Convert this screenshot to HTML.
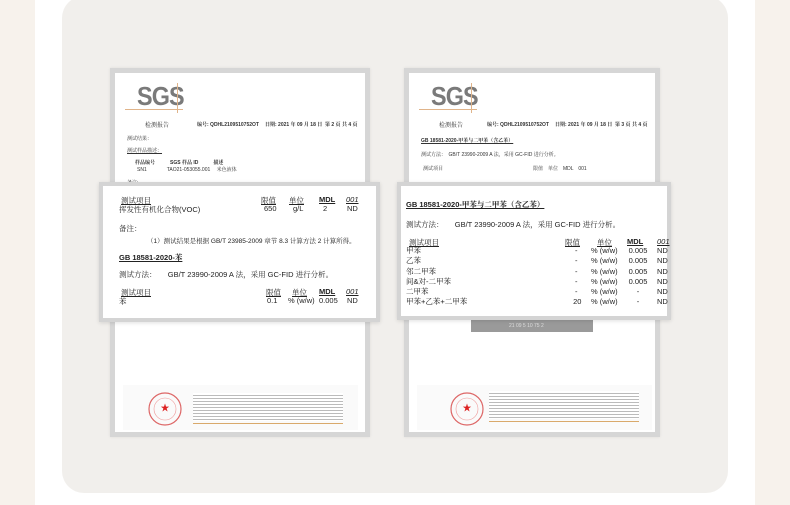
<!DOCTYPE html>
<html><head><meta charset="utf-8"><style>
*{margin:0;padding:0;box-sizing:border-box}
body{width:790px;height:505px;background:#fff;position:relative;overflow:hidden;font-family:"Liberation Sans","Noto Serif CJK SC",sans-serif;color:#222}
.a{position:absolute}
.cream{background:#f7f2ec}
.panel{left:62px;top:-4px;width:666px;height:497px;background:#f1efec;border-radius:22px}
.doc{background:#fff;border:5px solid #d6d6d6;box-shadow:0 0 3px rgba(0,0,0,.08)}
.card{background:#fff;border:4px solid #d4d4d4;box-shadow:0 1px 4px rgba(0,0,0,.12)}
.sgs{font:bold 26px "Liberation Sans",sans-serif;color:#7a7a7a;letter-spacing:-1px;transform:scaleX(.9);transform-origin:left}
.t{font-size:5px;color:#333;white-space:nowrap}
.s{font-size:7.5px;white-space:nowrap;color:#222}
.u{text-decoration:underline}
</style></head><body>
<div class="a cream" style="left:0;top:0;width:35px;height:505px"></div>
<div class="a cream" style="left:755px;top:0;width:35px;height:505px"></div>
<div class="a panel"></div>

<!-- left doc -->
<div class="a doc" style="left:110px;top:68px;width:260px;height:369px">
 <div class="a sgs" style="left:22px;top:8px">SGS</div>
 <div class="a" style="left:10px;top:36px;width:58px;height:1px;background:#e0b48a"></div>
 <div class="a" style="left:62px;top:10px;width:1px;height:30px;background:#e0b48a"></div>
 <div class="a t" style="left:30px;top:47px;font-size:6px">检测报告</div>
 <div class="a t" style="left:82px;top:48px;font-weight:bold">编号: QDHL2109510752OT</div>
 <div class="a t" style="left:150px;top:48px;font-weight:bold">日期: 2021 年 09 月 18 日</div>
 <div class="a t" style="left:210px;top:48px;font-weight:bold">第 2 页 共 4 页</div>
 <div class="a t" style="left:12px;top:62px">测试结果：</div>
 <div class="a t u" style="left:12px;top:74px">测试样品描述：</div>
 <div class="a t" style="left:20px;top:86px;font-weight:bold">样品编号　　　SGS 样品 ID　　　描述</div>
 <div class="a t" style="left:22px;top:93px">SN1　　　　TAO21-053055.001　 米色液体</div>
 <div class="a t" style="left:12px;top:106px">备注:</div>
 <div class="a" style="left:8px;top:312px;width:235px;height:45px;background:#fafafa"></div>
 <svg class="a" style="left:32px;top:318px" width="36" height="36"><circle cx="18" cy="18" r="16" fill="none" stroke="#d66" stroke-width="1.2"/><circle cx="18" cy="18" r="11" fill="none" stroke="#e99" stroke-width=".6"/><text x="18" y="20" font-size="9" fill="#d22" text-anchor="middle">★</text></svg>
 <div class="a" style="left:78px;top:320px;width:150px;height:28px;background:repeating-linear-gradient(#fff 0 2px,#bbb 2px 3px)"></div>
 <div class="a" style="left:78px;top:350px;width:150px;height:1px;background:#d9a96b"></div>
</div>
<div class="a card" style="left:99px;top:182px;width:281px;height:140px">
 <div class="a s u" style="left:18px;top:9px">测试项目</div>
 <div class="a s u" style="left:158px;top:9px">限值</div>
 <div class="a s u" style="left:186px;top:9px">单位</div>
 <div class="a s u" style="left:216px;top:9px;font-weight:bold">MDL</div>
 <div class="a s u" style="left:243px;top:9px;font-style:italic">001</div>
 <div class="a s" style="left:16px;top:18px">挥发性有机化合物(VOC)</div>
 <div class="a s" style="left:161px;top:18px">650</div>
 <div class="a s" style="left:190px;top:18px">g/L</div>
 <div class="a s" style="left:220px;top:18px">2</div>
 <div class="a s" style="left:244px;top:18px">ND</div>
 <div class="a s" style="left:16px;top:37px">备注：</div>
 <div class="a s" style="left:44px;top:50px;font-size:6.5px">（1）测试结果是根据 GB/T 23985-2009 章节 8.3 计算方法 2 计算所得。</div>
 <div class="a s u" style="left:16px;top:66px;font-weight:bold">GB 18581-2020-苯</div>
 <div class="a s" style="left:16px;top:83px">测试方法：　　GB/T 23990-2009 A 法，采用 GC-FID 进行分析。</div>
 <div class="a s u" style="left:18px;top:101px">测试项目</div>
 <div class="a s u" style="left:163px;top:101px">限值</div>
 <div class="a s u" style="left:189px;top:101px">单位</div>
 <div class="a s u" style="left:216px;top:101px;font-weight:bold">MDL</div>
 <div class="a s u" style="left:243px;top:101px;font-style:italic">001</div>
 <div class="a s" style="left:16px;top:110px">苯</div>
 <div class="a s" style="left:164px;top:110px">0.1</div>
 <div class="a s" style="left:185px;top:110px">% (w/w)</div>
 <div class="a s" style="left:216px;top:110px">0.005</div>
 <div class="a s" style="left:244px;top:110px">ND</div>
</div>

<!-- right doc -->
<div class="a doc" style="left:404px;top:68px;width:256px;height:369px">
 <div class="a sgs" style="left:22px;top:8px">SGS</div>
 <div class="a" style="left:10px;top:36px;width:58px;height:1px;background:#e0b48a"></div>
 <div class="a" style="left:62px;top:10px;width:1px;height:30px;background:#e0b48a"></div>
 <div class="a t" style="left:30px;top:47px;font-size:6px">检测报告</div>
 <div class="a t" style="left:78px;top:48px;font-weight:bold">编号: QDHL2109510752OT</div>
 <div class="a t" style="left:146px;top:48px;font-weight:bold">日期: 2021 年 09 月 18 日</div>
 <div class="a t" style="left:206px;top:48px;font-weight:bold">第 3 页 共 4 页</div>
 <div class="a t u" style="left:12px;top:64px;font-weight:bold">GB 18581-2020-甲苯与二甲苯（含乙苯）</div>
 <div class="a t" style="left:12px;top:78px">测试方法：　GB/T 23990-2009 A 法，采用 GC-FID 进行分析。</div>
 <div class="a t" style="left:14px;top:92px">测试项目　　　　　　　　　　　　　　　　　　限值　单位　MDL　001</div>
 <div class="a" style="left:62px;top:247px;width:122px;height:12px;background:#9a9a9a"></div>
 <div class="a t" style="left:100px;top:250px;color:#ddd">21 09 5 10 75 2</div>
 <div class="a" style="left:8px;top:312px;width:235px;height:45px;background:#fafafa"></div>
 <svg class="a" style="left:40px;top:318px" width="36" height="36"><circle cx="18" cy="18" r="16" fill="none" stroke="#d66" stroke-width="1.2"/><circle cx="18" cy="18" r="11" fill="none" stroke="#e99" stroke-width=".6"/><text x="18" y="20" font-size="9" fill="#d22" text-anchor="middle">★</text></svg>
 <div class="a" style="left:80px;top:318px;width:150px;height:28px;background:repeating-linear-gradient(#fff 0 2px,#bbb 2px 3px)"></div>
 <div class="a" style="left:80px;top:348px;width:150px;height:1px;background:#d9a96b"></div>
</div>
<div class="a card" style="left:397px;top:182px;width:274px;height:138px">
 <div class="a s u" style="left:5px;top:13px;font-weight:bold">GB 18581-2020-甲苯与二甲苯（含乙苯）</div>
 <div class="a s" style="left:5px;top:33px">测试方法：　　GB/T 23990-2009 A 法，采用 GC-FID 进行分析。</div>
 <div class="a s u" style="left:8px;top:51px">测试项目</div>
 <div class="a s u" style="left:164px;top:51px">限值</div>
 <div class="a s u" style="left:196px;top:51px">单位</div>
 <div class="a s u" style="left:226px;top:51px;font-weight:bold">MDL</div>
 <div class="a s u" style="left:256px;top:51px;font-style:italic">001</div>
 <div class="a s" style="left:5px;top:60px;line-height:10.3px">甲苯<br>乙苯<br>邻二甲苯<br>间&amp;对-二甲苯<br>二甲苯<br>甲苯+乙苯+二甲苯</div>
 <div class="a s" style="left:170px;top:60px;line-height:10.3px;text-align:center">-<br>-<br>-<br>-<br>-<br>&nbsp;20</div>
 <div class="a s" style="left:190px;top:60px;line-height:10.3px">% (w/w)<br>% (w/w)<br>% (w/w)<br>% (w/w)<br>% (w/w)<br>% (w/w)</div>
 <div class="a s" style="left:225px;top:60px;line-height:10.3px;text-align:center;width:24px">0.005<br>0.005<br>0.005<br>0.005<br>-<br>-</div>
 <div class="a s" style="left:256px;top:60px;line-height:10.3px">ND<br>ND<br>ND<br>ND<br>ND<br>ND</div>
</div>
</body></html>
